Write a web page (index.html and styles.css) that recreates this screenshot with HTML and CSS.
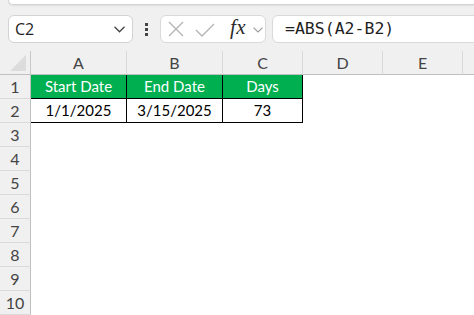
FILE: index.html
```html
<!DOCTYPE html>
<html>
<head>
<meta charset="utf-8">
<link rel="stylesheet" href="styles.css">
</head>
<body>
<div class="topbar"></div>
<div class="fbar">
  <div class="namebox">
    <span class="ref">C2</span>
    <svg class="chev" width="11" height="7" viewBox="0 0 11 7"><path d="M0.5 0.8 L5.5 5.8 L10.5 0.8" fill="none" stroke="#444" stroke-width="1.3"/></svg>
  </div>
  <div class="dots"><span></span><span></span><span></span></div>
  <div class="fxbox">
    <svg class="x" width="16" height="16" viewBox="0 0 16 16"><path d="M1 1 L15 15 M15 1 L1 15" stroke="#b3b3b3" stroke-width="1.3" fill="none"/></svg>
    <svg class="check" width="20" height="14" viewBox="0 0 20 14"><path d="M1 7 L7 13 L19 1" stroke="#b3b3b3" stroke-width="1.3" fill="none"/></svg>
    <span class="fx">fx</span>
    <svg class="chev2" width="10" height="6" viewBox="0 0 10 6"><path d="M0.5 0.7 L5 5 L9.5 0.7" fill="none" stroke="#999" stroke-width="1.1"/></svg>
  </div>
  <div class="formula">=ABS(A2-B2)</div>
</div>
<div class="sheet">
  <div class="corner"><div class="tri"></div></div>
  <div class="ch">A</div><div class="ch">B</div><div class="ch">C</div><div class="ch">D</div><div class="ch">E</div><div class="ch last"></div>

  <div class="rh">1</div>
  <div class="c hd">Start Date</div><div class="c hd">End Date</div><div class="c hd">Days</div><div class="c"></div><div class="c"></div><div class="c"></div>

  <div class="rh">2</div>
  <div class="c td">1/1/2025</div><div class="c td">3/15/2025</div><div class="c td">73</div><div class="c"></div><div class="c"></div><div class="c"></div>

  <div class="rh">3</div><div class="c span"></div>
  <div class="rh">4</div><div class="c span"></div>
  <div class="rh">5</div><div class="c span"></div>
  <div class="rh">6</div><div class="c span"></div>
  <div class="rh">7</div><div class="c span"></div>
  <div class="rh">8</div><div class="c span"></div>
  <div class="rh">9</div><div class="c span"></div>
  <div class="rh">10</div><div class="c span"></div>
</div>
</body>
</html>
```

FILE: styles.css
```css
* { box-sizing: border-box; }
html, body {
  margin: 0;
  padding: 0;
  width: 474px;
  height: 315px;
  overflow: hidden;
  background: #f0f0f0;
  font-family: "Lato", "Open Sans", sans-serif;
}
.topbar {
  margin-left: 8px;
  height: 5px;
  background: #ffffff;
  border-bottom: 1px solid #d4d4d4;
  border-left: 1px solid #d4d4d4;
  border-bottom-left-radius: 6px;
  box-shadow: 0 1px 2px rgba(0,0,0,0.08);
}
.fbar {
  display: flex;
  align-items: stretch;
  height: 28px;
  margin-top: 10px;
  padding-left: 8px;
}
.namebox {
  width: 125px;
  background: #fff;
  border: 1px solid #d3d3d3;
  border-radius: 6px;
  display: flex;
  align-items: center;
  justify-content: space-between;
  padding: 0 7px 0 6px;
}
.ref {
  font-family: "Open Sans", sans-serif;
  font-size: 16px;
  color: #1f1f1f;
}
.chev { margin-top: 1px; }
.dots {
  width: 27px;
  display: flex;
  flex-direction: column;
  align-items: center;
  justify-content: center;
  gap: 2px;
}
.dots span {
  width: 3px;
  height: 3px;
  background: #444;
}
.fxbox {
  width: 106px;
  background: #fff;
  border: 1px solid #d9d9d9;
  border-radius: 6px;
  display: flex;
  align-items: center;
  padding-left: 7px;
}
.x { margin-right: 11px; }
.check { margin-right: 15px; margin-top: 1px; }
.fx {
  font-family: "Liberation Serif", serif;
  font-style: italic;
  font-weight: normal;
  font-size: 21px;
  color: #2b2b2b;
  margin-top: -3px;
  margin-right: 7px;
  letter-spacing: 0.5px;
}
.chev2 { margin-top: 2px; }
.formula {
  margin-left: 6px;
  flex: 1;
  margin-right: -10px;
  background: #fff;
  border: 1px solid #d9d9d9;
  border-radius: 6px;
  padding-left: 12px;
  font-family: "DejaVu Sans Mono", monospace;
  font-size: 16.5px;
  line-height: 26px;
  color: #1f1f1f;
}
.sheet {
  margin-top: 8px;
  display: grid;
  grid-template-columns: 31px 96px 96px 80px 80px 80px 11px;
  grid-template-rows: 24px repeat(10, 24px);
  background: #fff;
}
.corner {
  background: #f0f0f0;
  border-right: 1px solid #c8c8c8;
  border-bottom: 1px solid #c0c0c0;
  position: relative;
}
.tri {
  position: absolute;
  right: 4px;
  bottom: 3px;
  width: 0;
  height: 0;
  border-left: 16px solid transparent;
  border-bottom: 16px solid #dcdcdc;
}
.ch {
  background: #f0f0f0;
  border-right: 1px solid #d9d9d9;
  border-bottom: 1px solid #c0c0c0;
  text-align: center;
  font-size: 16px;
  line-height: 23px;
  color: #444;
}
.ch.last { border-right: none; }
.rh {
  background: #f0f0f0;
  border-right: 1px solid #c0c0c0;
  border-bottom: 1px solid #dadada;
  text-align: center;
  font-size: 16px;
  line-height: 23px;
  color: #444;
}
.c { background: #fff; }
.span { grid-column: 2 / -1; }
.hd {
  background: #00b050;
  color: #fff;
  border-right: 1px solid #000;
  border-bottom: 1px solid #000;
  text-align: center;
  font-size: 15px;
  line-height: 23px;
}
.td {
  color: #000;
  border-right: 1px solid #000;
  border-bottom: 1px solid #000;
  text-align: center;
  font-size: 15px;
  line-height: 23px;
}
```
